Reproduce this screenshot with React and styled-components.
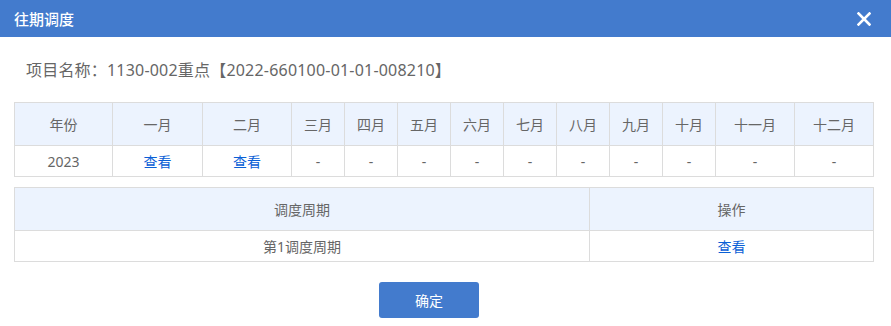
import React from 'react';
import styled, { createGlobalStyle } from 'styled-components';

const GlobalStyle = createGlobalStyle`
  html, body {
    margin: 0;
    padding: 0;
    background: #fff;
    font-family: "Noto Sans", "Noto Sans CJK SC", sans-serif;
  }
`;

const months = ['一月', '二月', '三月', '四月', '五月', '六月', '七月', '八月', '九月', '十月', '十一月', '十二月'];
const colWidths = [98, 90, 89, 53, 53, 53, 53, 53, 53, 53, 53, 79, 79];
const viewable = [true, true];

export default function App() {
  return (
    <>
      <GlobalStyle />
      <Dialog>
        <Header>
          <Title>往期调度</Title>
          <CloseButton aria-label="关闭">
            <svg width="14" height="14" viewBox="0 0 14 14">
              <path d="M1.5 1.5 L12.5 12.5 M12.5 1.5 L1.5 12.5" stroke="#fff" strokeWidth="2.6" strokeLinecap="square" />
            </svg>
          </CloseButton>
        </Header>
        <Body>
          <ProjectName>项目名称：1130-002重点【2022-660100-01-01-008210】</ProjectName>
          <Table>
            <colgroup>
              {colWidths.map((w, i) => <col key={i} style={{ width: w }} />)}
            </colgroup>
            <thead>
              <tr>
                <Th>年份</Th>
                {months.map((m) => <Th key={m}>{m}</Th>)}
              </tr>
            </thead>
            <tbody>
              <tr>
                <Td>2023</Td>
                {months.map((m, i) => (
                  <Td key={m}>{viewable[i] ? <Link>查看</Link> : '-'}</Td>
                ))}
              </tr>
            </tbody>
          </Table>
          <PeriodTable>
            <colgroup>
              <col style={{ width: 575 }} />
              <col style={{ width: 284 }} />
            </colgroup>
            <thead>
              <tr>
                <Th>调度周期</Th>
                <Th>操作</Th>
              </tr>
            </thead>
            <tbody>
              <tr>
                <Td>第1调度周期</Td>
                <Td><Link>查看</Link></Td>
              </tr>
            </tbody>
          </PeriodTable>
          <Footer>
            <PrimaryButton>确定</PrimaryButton>
          </Footer>
        </Body>
      </Dialog>
    </>
  );
}

const Dialog = styled.div`
  width: 891px;
  height: 326px;
  background: #fff;
  overflow: hidden;
`;

const Header = styled.div`
  height: 37px;
  background: #437bcd;
  display: flex;
  align-items: center;
  justify-content: space-between;
  padding: 0 20px 0 14px;
  box-sizing: border-box;
`;

const Title = styled.div`
  color: #fff;
  font-size: 15px;
  line-height: 20px;
  font-weight: 500;
`;

const CloseButton = styled.div`
  width: 14px;
  height: 14px;
  display: flex;
  cursor: pointer;
`;

const Body = styled.div`
  padding: 0 18px 0 14px;
`;

const ProjectName = styled.div`
  margin: 21px 0 20px 12px;
  font-size: 16px;
  line-height: 24px;
  letter-spacing: 0.2px;
  color: #666;
`;

const Table = styled.table`
  width: 859px;
  table-layout: fixed;
  border-collapse: collapse;
  font-size: 14px;
  color: #666;
  text-align: center;
`;

const PeriodTable = styled(Table)`
  margin-top: 10px;
`;

const Th = styled.th`
  height: 42px;
  padding: 0;
  font-weight: normal;
  background: #ecf3fe;
  border: 1px solid #dcdcdc;
`;

const Td = styled.td`
  height: 30px;
  padding: 0;
  border: 1px solid #dcdcdc;
`;

const Link = styled.a`
  color: #0a60d6;
  cursor: pointer;
`;

const Footer = styled.div`
  display: flex;
  justify-content: center;
  padding-right: 29px;
  margin-top: 20px;
`;

const PrimaryButton = styled.button`
  width: 100px;
  height: 36px;
  border: none;
  border-radius: 3px;
  background: #437bcd;
  color: #fff;
  font-family: inherit;
  font-size: 14px;
  cursor: pointer;
`;
